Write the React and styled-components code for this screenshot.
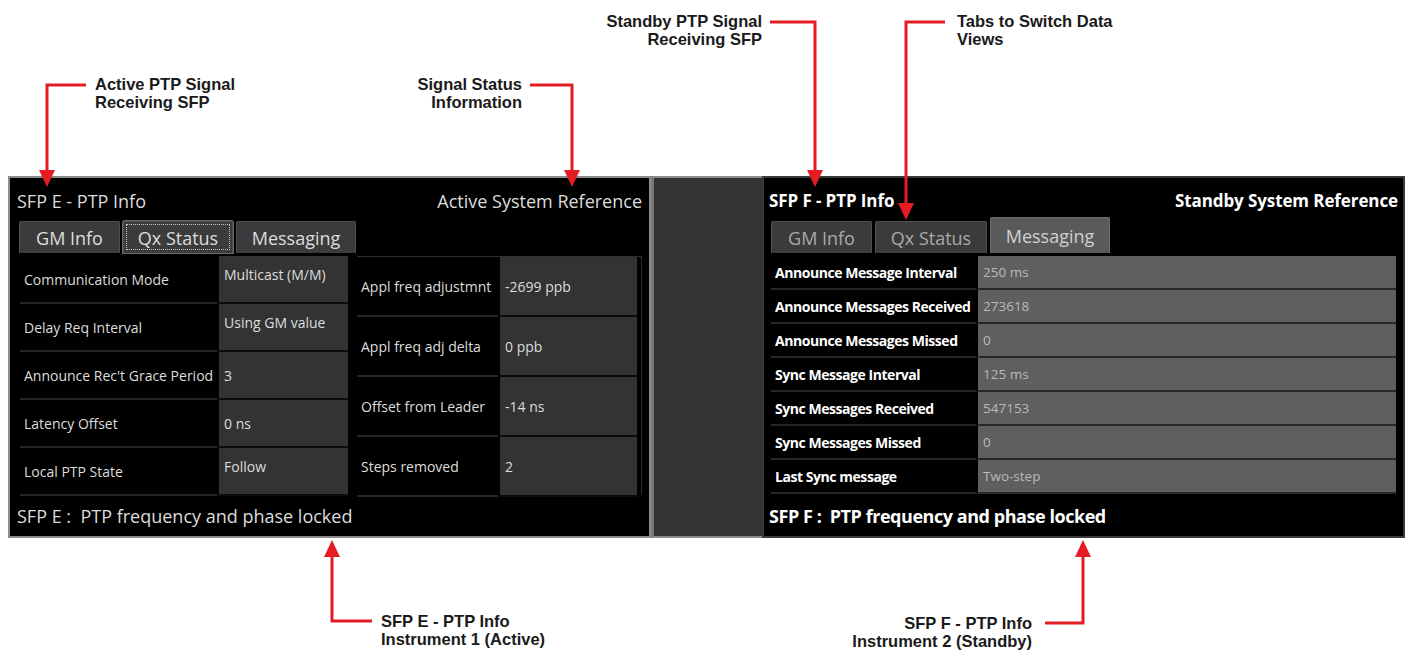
import React from 'react'
import styled, { createGlobalStyle } from "styled-components";

const GlobalStyle = createGlobalStyle`
  html, body {
    margin: 0;
    padding: 0;
    background: #ffffff;
  }
`;

const Page = styled.div`
  position: relative;
  width: 1411px;
  height: 652px;
  overflow: hidden;
  background: #ffffff;
  font-family: "Open Sans", "Noto Sans", sans-serif;
`;

const TopSpace = styled.div`
  height: 176px;
`;

const Strip = styled.div`
  display: flex;
  margin-left: 8px;
  width: 1397px;
  height: 362px;
`;

const Panel = styled.div`
  display: flex;
  flex-direction: column;
  box-sizing: border-box;
  width: ${(props) => props.w}px;
  height: 100%;
  background: #000;
  border: 2px solid ${(props) => props.edge};
  color: ${(props) => (props.bold ? "#ffffff" : "#dcdcdc")};
  font-weight: ${(props) => (props.bold ? 700 : 400)};
`;

const Gap = styled.div`
  flex: 1;
  background: #333333;
  border-left: 3px solid #7a7a7a;
  border-top: 2px solid #8c8c8c;
  border-bottom: 2px solid #8c8c8c;
`;

const Header = styled.div`
  display: flex;
  align-items: center;
  justify-content: space-between;
  box-sizing: border-box;
  height: 41px;
  padding: 4px ${(props) => (props.bold ? 5 : 7)}px 0 ${(props) => props.pad}px;
  font-size: ${(props) => (props.bold ? 17 : 18)}px;
  letter-spacing: ${(props) => (props.bold ? "-0.1px" : "0")};
`;

const Tabs = styled.div`
  display: flex;
  align-items: flex-end;
  gap: 3px;
  height: 34px;
  margin-left: ${(props) => props.pad}px;
`;

const Tab = styled.div`
  box-sizing: border-box;
  width: ${(props) => props.w}px;
  height: ${(props) => (props.lift ? 36 : 32)}px;
  display: flex;
  align-items: center;
  justify-content: center;
  font-size: 18px;
  font-weight: 400;
  background: ${(props) => (props.lift ? "#5a5a5a" : "#3b3b3b")};
  color: ${(props) => props.fg};
  border: 1px solid ${(props) => (props.lift ? "#6e6e6e" : "#4e4e4e")};
  border-bottom: none;
  border-radius: 2px 2px 0 0;
  outline: ${(props) => (props.focus ? "1px dotted #c8c8c8" : "none")};
  outline-offset: -4px;
  box-shadow: ${(props) => (props.focus ? "0 0 0 1px #6a6a6a" : "none")};
`;

const TableArea = styled.div`
  display: flex;
  gap: 9px;
  margin: 3px 0 0 ${(props) => props.pad}px;
  height: 239px;
`;

const Block = styled.div`
  display: grid;
  grid-template-columns: ${(props) => props.cols};
  grid-auto-rows: ${(props) => props.row}px;
  box-sizing: border-box;
  width: ${(props) => props.w}px;
  border-top: ${(props) => (props.framed ? "1px solid #2e2e2e" : "none")};
  border-right: ${(props) => (props.framed ? "1px solid #2e2e2e" : "none")};
  padding-right: ${(props) => (props.framed ? 4 : 0)}px;
`;

const Label = styled.div`
  display: flex;
  align-items: center;
  padding-left: 4px;
  font-size: 14px;
  font-weight: ${(props) => (props.strong ? 700 : 400)};
  letter-spacing: ${(props) => (props.strong ? "-0.45px" : "0")};
  color: ${(props) => (props.strong ? "#ffffff" : "#dddddd")};
  background: #000;
  border-bottom: 2px solid #262626;
  white-space: nowrap;
`;

const Value = styled.div`
  display: flex;
  align-items: ${(props) => (props.top ? "flex-start" : "center")};
  padding: ${(props) => (props.top ? "9px" : "0")} 0 0 5px;
  font-size: ${(props) => (props.light ? 13.5 : 14)}px;
  font-weight: 400;
  color: ${(props) => (props.light ? "#b9b9b9" : "#dddddd")};
  background: ${(props) => (props.light ? "#5f5f5f" : "#333333")};
  border-bottom: 2px solid ${(props) => (props.light ? "#2a2a2a" : "#0c0c0c")};
  border-left: 2px solid #000;
  white-space: nowrap;
`;

const Footer = styled.div`
  display: flex;
  align-items: center;
  flex: 1;
  padding-left: ${(props) => props.pad}px;
  font-size: 18px;
  letter-spacing: ${(props) => (props.bold ? "-0.45px" : "0")};
`;

const Callout = styled.div`
  position: absolute;
  top: ${(props) => props.top}px;
  left: ${(props) => (props.left != null ? props.left + "px" : "auto")};
  right: ${(props) => (props.right != null ? props.right + "px" : "auto")};
  text-align: ${(props) => (props.right != null ? "right" : "left")};
  font-family: "Liberation Sans", Arial, sans-serif;
  font-weight: 700;
  font-size: 16.5px;
  line-height: 18px;
  color: #1a1a1a;
  white-space: nowrap;
`;

const Overlay = styled.svg`
  position: absolute;
  left: 0;
  top: 0;
  pointer-events: none;
`;

const leftRows = [
  ["Communication Mode", "Multicast (M/M)"],
  ["Delay Req Interval", "Using GM value"],
  ["Announce Rec't Grace Period", "3"],
  ["Latency Offset", "0 ns"],
  ["Local PTP State", "Follow"],
];

const midRows = [
  ["Appl freq adjustmnt", "-2699 ppb"],
  ["Appl freq adj delta", "0 ppb"],
  ["Offset from Leader", "-14 ns"],
  ["Steps removed", "2"],
];

const msgRows = [
  ["Announce Message Interval", "250 ms"],
  ["Announce Messages Received", "273618"],
  ["Announce Messages Missed", "0"],
  ["Sync Message Interval", "125 ms"],
  ["Sync Messages Received", "547153"],
  ["Sync Messages Missed", "0"],
  ["Last Sync message", "Two-step"],
];

const RED = "#e41d24";

// red callout lines: [path, arrowhead points]
const arrows = [
  ["M 86 85 H 47 V 172", "39,170 55,170 47,187"],
  ["M 530 85 H 572 V 172", "564,170 580,170 572,187"],
  ["M 770 22 H 815 V 172", "807,170 823,170 815,187"],
  ["M 945 22 H 906 V 205", "898,203 914,203 906,220"],
  ["M 372 621 H 332 V 556", "324,557 340,557 332,540"],
  ["M 1045 623 H 1083 V 556", "1075,557 1091,557 1083,540"],
];

export default function App() {
  return (
    <Page>
      <GlobalStyle />
      <TopSpace />
      <Strip>
        <Panel w={643} edge="#8c8c8c">
          <Header pad={7}>
            <span>SFP E - PTP Info</span>
            <span>Active System Reference</span>
          </Header>
          <Tabs pad={9}>
            <Tab w={101} fg="#dddddd">GM Info</Tab>
            <Tab w={110} fg="#dddddd" focus>Qx Status</Tab>
            <Tab w={120} fg="#dddddd">Messaging</Tab>
          </Tabs>
          <TableArea pad={10}>
            <Block w={328} cols="197px 131px" row={48}>
              {leftRows.map(([k, v]) => (
                <React.Fragment key={k}>
                  <Label>{k}</Label>
                  <Value top={k === "Communication Mode" || k === "Delay Req Interval" || k === "Local PTP State"}>{v}</Value>
                </React.Fragment>
              ))}
            </Block>
            <Block w={285} cols="141px 139px" row={60} framed>
              {midRows.map(([k, v]) => (
                <React.Fragment key={k}>
                  <Label>{k}</Label>
                  <Value>{v}</Value>
                </React.Fragment>
              ))}
            </Block>
          </TableArea>
          <Footer pad={7}>SFP E :&nbsp; PTP frequency and phase locked</Footer>
        </Panel>
        <Gap />
        <Panel w={643} edge="#3a3a3a" bold>
          <Header pad={5} bold>
            <span>SFP F - PTP Info</span>
            <span>Standby System Reference</span>
          </Header>
          <Tabs pad={7}>
            <Tab w={101} fg="#a9a9a9">GM Info</Tab>
            <Tab w={112} fg="#a9a9a9">Qx Status</Tab>
            <Tab w={120} fg="#d0d0d0" lift>Messaging</Tab>
          </Tabs>
          <TableArea pad={7}>
            <Block w={625} cols="205px 420px" row={34}>
              {msgRows.map(([k, v]) => (
                <React.Fragment key={k}>
                  <Label strong>{k}</Label>
                  <Value light>{v}</Value>
                </React.Fragment>
              ))}
            </Block>
          </TableArea>
          <Footer pad={5} bold>SFP F :&nbsp; PTP frequency and phase locked</Footer>
        </Panel>
      </Strip>

      <Callout left={95} top={75}>Active PTP Signal<br />Receiving SFP</Callout>
      <Callout right={889} top={75}>Signal Status<br />Information</Callout>
      <Callout right={649} top={12}>Standby PTP Signal<br />Receiving SFP</Callout>
      <Callout left={957} top={12}>Tabs to Switch Data<br />Views</Callout>
      <Callout left={381} top={612}>SFP E - PTP Info<br />Instrument 1 (Active)</Callout>
      <Callout right={379} top={614}>SFP F - PTP Info<br />Instrument 2 (Standby)</Callout>

      <Overlay width="1411" height="652" viewBox="0 0 1411 652">
        {arrows.map(([d, pts]) => (
          <g key={d}>
            <path d={d} fill="none" stroke={RED} strokeWidth="3" />
            <polygon points={pts} fill={RED} />
          </g>
        ))}
      </Overlay>
    </Page>
  );
}
